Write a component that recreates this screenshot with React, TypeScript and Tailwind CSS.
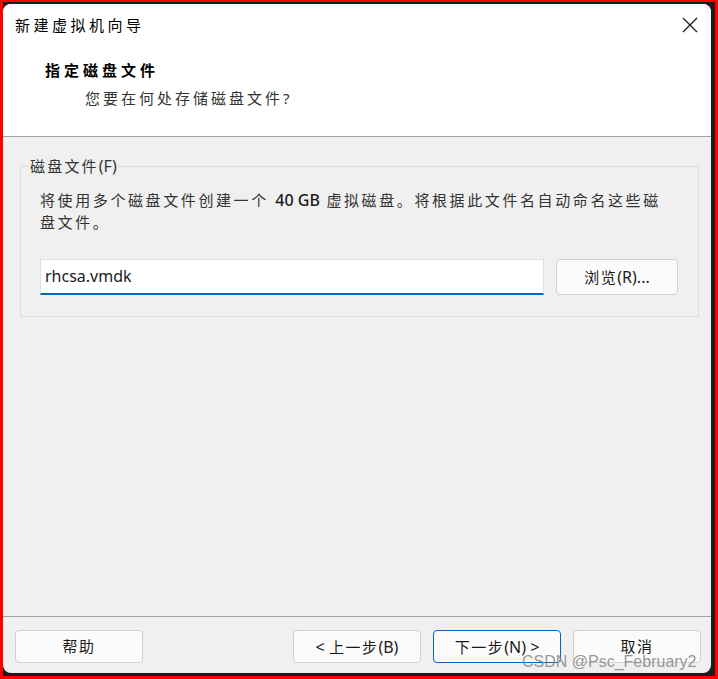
import React from "react";

const cjk = "font-['Noto_Sans','Noto_Sans_CJK_SC',sans-serif]";

function Btn({ label, primary = false }: { label: React.ReactNode; primary?: boolean }) {
  return (
    <button
      className={`h-[33px] w-[128px] rounded-[4px] bg-[#fbfbfb] text-[15px] text-[#1b1b1b] tracking-[1.5px] border ${
        primary ? "border-[#0067c0]" : "border-[#d0d0d0]"
      }`}
    >
      {label}
    </button>
  );
}

export default function App() {
  return (
    <div className={`relative w-[718px] h-[679px] bg-[#ff0000] pt-[2px] px-[3px] pb-[3px] ${cjk}`}>
      <div className="w-full h-full bg-[#1c1c1c] pt-[2px] pr-[4px] pb-[3px]">
        <div className="w-full h-full rounded-[8px] overflow-hidden bg-[#f0f0f0] flex flex-col">
          {/* header area */}
          <div className="bg-white h-[132px] flex flex-col">
            <div className="h-[42px] flex items-center justify-between pl-[12px] pr-[13px]">
              <span className="text-[15px] tracking-[3.5px] text-black">新建虚拟机向导</span>
              <svg width="16" height="16" viewBox="0 0 16 16">
                <path d="M1 1 L15 15 M15 1 L1 15" stroke="#1a1a1a" strokeWidth="1.3" fill="none" />
              </svg>
            </div>
            <div className="pl-[42px] pt-[14px] leading-[20px] text-[15px] font-bold tracking-[4px] text-black">
              指定磁盘文件
            </div>
            <div className="pl-[82px] pt-[8px] leading-[20px] text-[15px] tracking-[3px] text-[#333]">
              您要在何处存储磁盘文件?
            </div>
          </div>
          <div className="h-px bg-[#a0a0a0]" />

          {/* body */}
          <div className="flex-1 pt-[21px] pl-[17px] pr-[12px]">
            <fieldset className="border border-[#dcdcdc] h-[159px] px-[19px]">
              <legend className="-ml-[11px] px-[1px] text-[15px] tracking-[2.2px] text-[#333] leading-[16px]">
                磁盘文件<span className="tracking-normal text-[16px]">(F)</span>
              </legend>
              <p className="mt-[15px] mr-[6px] text-[15px] leading-[22px] tracking-[2.6px] text-[#333]">
                将使用多个磁盘文件创建一个 <span className="tracking-normal text-[16px] font-medium text-[#1b1b1b]">40 GB</span> 虚拟磁盘。将根据此文件名自动命名这些磁盘文件。
              </p>
              <div className="mt-[26px] flex items-center gap-[12px]">
                <div className="h-[36px] w-[504px] bg-white border border-[#e0e0e0] border-b-2 border-b-[#0067c0] flex items-center pl-[4px] pb-[2px]">
                  <span className="text-[16px] text-[#1b1b1b]">rhcsa.vmdk</span>
                </div>
                <button className="h-[36px] w-[122px] rounded-[4px] bg-[#fbfbfb] border border-[#d0d0d0] text-[15px] tracking-[1.5px] text-[#1b1b1b]">
                  浏览<span className="tracking-normal text-[16px]">(R)...</span>
                </button>
              </div>
            </fieldset>
          </div>

          <div className="h-px bg-[#a0a0a0]" />
          {/* footer */}
          <div className="h-[56px] pt-[13px] pl-[12px] flex">
            <Btn label="帮助" />
            <div className="ml-[150px] flex gap-[12px]">
              <Btn label={<><span className="tracking-normal text-[16px]">&lt; </span>上一步<span className="tracking-normal text-[16px]">(B)</span></>} />
              <Btn label={<>下一步<span className="tracking-normal text-[16px]">(N) &gt;</span></>} primary />
              <Btn label="取消" />
            </div>
          </div>
        </div>
      </div>
      <div className="absolute left-[522px] top-[650px] text-[16px] text-[#8a8a8a]/90 font-['Liberation_Sans',sans-serif] whitespace-nowrap">
        CSDN @Psc_February2
      </div>
    </div>
  );
}
